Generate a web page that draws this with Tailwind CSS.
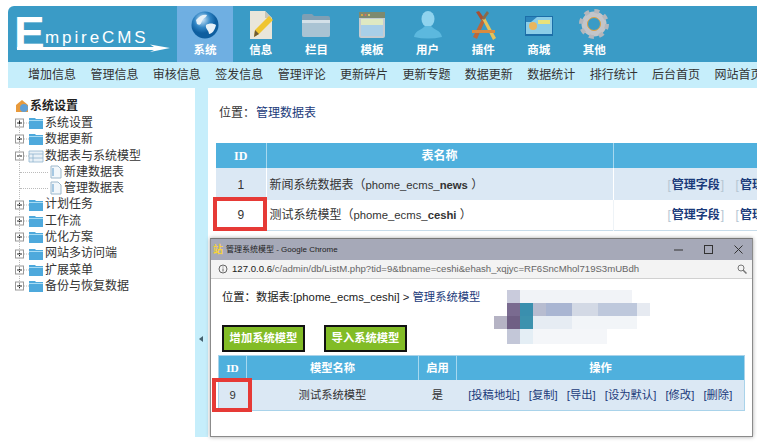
<!DOCTYPE html>
<html lang="zh"><head><meta charset="utf-8"><script src="https://cdn.jsdelivr.net/npm/@tailwindcss/browser@4"></script></head>
<body class="bg-white">
<div class="relative w-[757px] h-[443px] overflow-hidden bg-white pl-[8px] pt-[6px] font-['Liberation_Sans','Noto_Sans_CJK_SC',sans-serif] text-[12px] text-[#333]">
  <header class="flex h-[56px] bg-[#3a9bc6] rounded-tl-[6px]">
    <div class="w-[169px] shrink-0">
      <svg width="169" height="56" viewBox="0 0 169 56">
        <text x="6" y="43" fill="#fff" font-family="Liberation Sans" font-weight="bold" font-size="46">E</text>
        <text x="37" y="37" fill="#fff" font-family="Liberation Sans" font-size="17" letter-spacing="2.900">mpireCMS</text>
        <path d="M9 41H146L142 38.500L162 42L142 46L146 44H9Z" fill="#fff"/>
      </svg>
    </div>
    <nav class="flex text-white font-bold text-[11.5px] leading-none">
      <div class="w-[56px] flex flex-col items-center bg-[#6fafe2] pt-[3px]">
        <svg width="32" height="32" viewBox="0 0 32 32"><defs><radialGradient id="g" cx=".4" cy=".3"><stop offset="0" stop-color="#cfe8fa"/><stop offset=".6" stop-color="#2f84c4"/><stop offset="1" stop-color="#0e5e9f"/></radialGradient></defs><circle cx="16" cy="16" r="13.500" fill="url(#g)"/><path d="M7 11c4-5 8-6 11-5-1 3-4 3-5 6s-2 5-5 3zM17 16c3-2 7-2 10 0-1 5-4 9-7 9 0-4-4-5-3-9z" fill="#e6f1f8"/></svg>
        <span class="mt-[4px]">系统</span>
      </div>
      <div class="w-[55.6px] flex flex-col items-center pt-[3px]">
        <svg width="32" height="32" viewBox="0 0 32 32"><path d="M5 2H20L27 9V30H5Z" fill="#e9e6da"/><path d="M20 2V9H27Z" fill="#c9c5b5"/><path d="M9 28L10 21L24 7L28 11L14 25Z" fill="#efc52f"/><path d="M9 28L10 21L14 25Z" fill="#6d5a36"/></svg>
        <span class="mt-[4px]">信息</span>
      </div>
      <div class="w-[55.6px] flex flex-col items-center pt-[3px]">
        <svg width="32" height="32" viewBox="0 0 32 32"><path d="M2 7Q2 5 4 5H12L14 7H28Q30 7 30 9V26Q30 28 28 28H4Q2 28 2 26Z" fill="#7f9fb4"/><path d="M2 11H30V26Q30 28 28 28H4Q2 28 2 26Z" fill="#a9c3d3"/><path d="M2 11H30V14H2Z" fill="#d3e0e8"/></svg>
        <span class="mt-[4px]">栏目</span>
      </div>
      <div class="w-[55.6px] flex flex-col items-center pt-[3px]">
        <svg width="32" height="32" viewBox="0 0 32 32"><rect x="3" y="3" width="26" height="26" rx="2" fill="#c5ccd2"/><rect x="3" y="3" width="26" height="6" fill="#7d8a70"/><circle cx="6" cy="6" r="1" fill="#e8b13c"/><circle cx="9.500" cy="6" r="1" fill="#df6b5c"/><circle cx="13" cy="6" r="1" fill="#e8d96c"/><rect x="5" y="10" width="22" height="17" fill="#a9cfe8"/><rect x="5" y="10" width="22" height="6" fill="#dfe9c2"/></svg>
        <span class="mt-[4px]">模板</span>
      </div>
      <div class="w-[55.6px] flex flex-col items-center pt-[3px]">
        <svg width="32" height="32" viewBox="0 0 32 32"><ellipse cx="16" cy="10" rx="6.500" ry="8" fill="#8fd3ee"/><path d="M2 28C3 21 10 21 13 17H19C22 21 29 21 30 28Q16 31 2 28Z" fill="#5cb8de"/></svg>
        <span class="mt-[4px]">用户</span>
      </div>
      <div class="w-[55.6px] flex flex-col items-center pt-[3px]">
        <svg width="32" height="32" viewBox="0 0 32 32"><path d="M6 28L16 8L19 9.500L10 30Z" fill="#b9683c"/><path d="M15 9.500L17.500 8L29 29L26 31Z" fill="#e6c25a"/><path d="M5 21H28V24H5Z" fill="#d98b3f"/><path d="M9 3L12 2L17 9L14 11Z" fill="#a94f32"/><path d="M20 2L22 4L17 11L15 9Z" fill="#8a6a4a"/></svg>
        <span class="mt-[4px]">插件</span>
      </div>
      <div class="w-[55.6px] flex flex-col items-center pt-[3px]">
        <svg width="32" height="32" viewBox="0 0 32 32"><rect x="2" y="7" width="28" height="20" fill="#1c6ea8"/><rect x="3" y="8" width="26" height="17" fill="#8bcde8"/><circle cx="10" cy="17" r="4" fill="#e9b65d"/><rect x="15" y="11" width="12" height="4" fill="#e9e27a"/><path d="M3 8H14L8 13H3Z" fill="#2c86bd"/></svg>
        <span class="mt-[4px]">商城</span>
      </div>
      <div class="w-[55.6px] flex flex-col items-center pt-[3px]">
        <svg width="32" height="32" viewBox="0 0 32 32"><circle cx="16" cy="15" r="9.500" fill="none" stroke="#c3c5c9" stroke-width="6"/><circle cx="16" cy="15" r="13" fill="none" stroke="#b5b7bc" stroke-width="4" stroke-dasharray="5 5.200"/><circle cx="16" cy="15" r="5" fill="#3a9bc6"/><circle cx="16" cy="15" r="6.500" fill="none" stroke="#e3a13c" stroke-width="1"/></svg>
        <span class="mt-[4px]">其他</span>
      </div>
    </nav>
  </header>
  <nav class="flex h-[26px] items-center bg-[#c6eefb] pl-[20px] gap-[14.4px] whitespace-nowrap text-[#333]">
    <span>增加信息</span><span>管理信息</span><span>审核信息</span><span>签发信息</span><span>管理评论</span><span>更新碎片</span><span>更新专题</span><span>数据更新</span><span>数据统计</span><span>排行统计</span><span>后台首页</span><span class="shrink-0">网站首页</span>
  </nav>
  <main class="flex h-[349px]">
    <aside class="w-[187px] shrink-0 bg-white pt-[10px] pl-[7px] relative">
      <div class="absolute left-[11px] top-[36px] h-[165px] border-l border-dotted border-[#bbb]"></div>
      <div class="flex items-center h-[16px] gap-[1px] font-bold text-[#222]">
        <svg width="14" height="14" viewBox="0 0 14 14"><path d="M7 1L13 6V13H1V6Z" fill="#e89a3c"/><circle cx="9" cy="9" r="4" fill="#5f9fd6"/></svg><span>系统设置</span>
      </div>
      <ul class="mt-[1px] leading-[16.3px]">
        <li class="flex items-center h-[16.3px]"><svg class="shrink-0" width="30" height="14" viewBox="0 0 30 14"><rect x=".5" y="3" width="8" height="8" fill="#fff" stroke="#999"/><path d="M2 7H7M4.500 4.500V9.500" stroke="#222"/><path d="M9 7H14" stroke="#bbb" stroke-dasharray="1 1"/><path d="M14 2H20L21 3H28V13H14Z" fill="#4ea9dc"/><path d="M14 4H28V5H14Z" fill="#a9dcf4"/></svg><span>系统设置</span></li>
        <li class="flex items-center h-[16.3px]"><svg class="shrink-0" width="30" height="14" viewBox="0 0 30 14"><rect x=".5" y="3" width="8" height="8" fill="#fff" stroke="#999"/><path d="M2 7H7M4.500 4.500V9.500" stroke="#222"/><path d="M9 7H14" stroke="#bbb" stroke-dasharray="1 1"/><path d="M14 2H20L21 3H28V13H14Z" fill="#4ea9dc"/><path d="M14 4H28V5H14Z" fill="#a9dcf4"/></svg><span>数据更新</span></li>
        <li class="flex items-center h-[16.3px]"><svg class="shrink-0" width="30" height="14" viewBox="0 0 30 14"><rect x=".5" y="3" width="8" height="8" fill="#fff" stroke="#999"/><path d="M2 7H7" stroke="#222"/><path d="M9 7H14" stroke="#bbb" stroke-dasharray="1 1"/><path d="M14 2H28V13H14Z" fill="#e9f1f7" stroke="#8fb5cf" stroke-width=".8"/><path d="M14 5H28M14 9H28M18 5V13" stroke="#8fb5cf" stroke-width=".8"/></svg><span>数据表与系统模型</span></li>
        <li class="relative flex items-center h-[16.3px] pl-[34px]"><span class="absolute left-[5px] top-[8px] w-[28px] border-t border-dotted border-[#bbb]"></span><svg class="shrink-0" width="14" height="14" viewBox="0 0 14 14"><path d="M2 1H9L12 4V13H2Z" fill="#f2f7fb" stroke="#9db8cc"/><path d="M4 3V11" stroke="#a6c8e2" stroke-width="2"/></svg><span class="ml-[1px]">新建数据表</span></li>
        <li class="relative flex items-center h-[16.3px] pl-[34px]"><span class="absolute left-[5px] top-[8px] w-[28px] border-t border-dotted border-[#bbb]"></span><svg class="shrink-0" width="14" height="14" viewBox="0 0 14 14"><path d="M2 1H9L12 4V13H2Z" fill="#f2f7fb" stroke="#9db8cc"/><path d="M4 3V11" stroke="#a6c8e2" stroke-width="2"/></svg><span class="ml-[1px]">管理数据表</span></li>
        <li class="flex items-center h-[16.3px]"><svg class="shrink-0" width="30" height="14" viewBox="0 0 30 14"><rect x=".5" y="3" width="8" height="8" fill="#fff" stroke="#999"/><path d="M2 7H7M4.500 4.500V9.500" stroke="#222"/><path d="M9 7H14" stroke="#bbb" stroke-dasharray="1 1"/><path d="M14 2H20L21 3H28V13H14Z" fill="#4ea9dc"/><path d="M14 4H28V5H14Z" fill="#a9dcf4"/></svg><span>计划任务</span></li>
        <li class="flex items-center h-[16.3px]"><svg class="shrink-0" width="30" height="14" viewBox="0 0 30 14"><rect x=".5" y="3" width="8" height="8" fill="#fff" stroke="#999"/><path d="M2 7H7M4.500 4.500V9.500" stroke="#222"/><path d="M9 7H14" stroke="#bbb" stroke-dasharray="1 1"/><path d="M14 2H20L21 3H28V13H14Z" fill="#4ea9dc"/><path d="M14 4H28V5H14Z" fill="#a9dcf4"/></svg><span>工作流</span></li>
        <li class="flex items-center h-[16.3px]"><svg class="shrink-0" width="30" height="14" viewBox="0 0 30 14"><rect x=".5" y="3" width="8" height="8" fill="#fff" stroke="#999"/><path d="M2 7H7M4.500 4.500V9.500" stroke="#222"/><path d="M9 7H14" stroke="#bbb" stroke-dasharray="1 1"/><path d="M14 2H20L21 3H28V13H14Z" fill="#4ea9dc"/><path d="M14 4H28V5H14Z" fill="#a9dcf4"/></svg><span>优化方案</span></li>
        <li class="flex items-center h-[16.3px]"><svg class="shrink-0" width="30" height="14" viewBox="0 0 30 14"><rect x=".5" y="3" width="8" height="8" fill="#fff" stroke="#999"/><path d="M2 7H7M4.500 4.500V9.500" stroke="#222"/><path d="M9 7H14" stroke="#bbb" stroke-dasharray="1 1"/><path d="M14 2H20L21 3H28V13H14Z" fill="#4ea9dc"/><path d="M14 4H28V5H14Z" fill="#a9dcf4"/></svg><span>网站多访问端</span></li>
        <li class="flex items-center h-[16.3px]"><svg class="shrink-0" width="30" height="14" viewBox="0 0 30 14"><rect x=".5" y="3" width="8" height="8" fill="#fff" stroke="#999"/><path d="M2 7H7M4.500 4.500V9.500" stroke="#222"/><path d="M9 7H14" stroke="#bbb" stroke-dasharray="1 1"/><path d="M14 2H20L21 3H28V13H14Z" fill="#4ea9dc"/><path d="M14 4H28V5H14Z" fill="#a9dcf4"/></svg><span>扩展菜单</span></li>
        <li class="flex items-center h-[16.3px]"><svg class="shrink-0" width="30" height="14" viewBox="0 0 30 14"><rect x=".5" y="3" width="8" height="8" fill="#fff" stroke="#999"/><path d="M2 7H7M4.500 4.500V9.500" stroke="#222"/><path d="M9 7H14" stroke="#bbb" stroke-dasharray="1 1"/><path d="M14 2H20L21 3H28V13H14Z" fill="#4ea9dc"/><path d="M14 4H28V5H14Z" fill="#a9dcf4"/></svg><span>备份与恢复数据</span></li>
      </ul>
    </aside>
    <div class="w-[13px] shrink-0 bg-[#c6eefb] pt-[248px] pl-[4px]"><div class="w-0 h-0 border-y-[3px] border-y-transparent border-r-[4px] border-r-[#44606e]"></div></div>
    <section class="flex-1 bg-white pl-[8px] pt-[17px] min-w-0">
      <p class="h-[16px] leading-[16px] pl-[3px]">位置：<span class="ml-[1px] text-[#1a3a7a]">管理数据表</span></p>
      <table class="mt-[22px] w-[560px] table-fixed border-collapse border-b border-[#c7dcea]">
        <colgroup><col class="w-[50px]"><col class="w-[347px]"><col></colgroup>
        <thead class="bg-[#4fb0dd] text-white font-bold"><tr class="h-[25px]"><th class="pt-[1px] border-r border-[#a6d8ef] font-['Liberation_Serif']">ID</th><th class="pt-[1px] border-r border-[#a6d8ef]">表名称</th><th></th></tr></thead>
        <tbody>
          <tr class="h-[32px] bg-[#dbe8f4]"><td class="pt-[1px] text-center">1</td><td class="pt-[1px] pl-[3px] border-l border-white">新闻系统数据表（<span class="text-[11.3px]">phome_ecms_<b>news</b></span> ）</td><td class="pt-[1px] pl-[54px] border-l border-white whitespace-nowrap text-[#b5c6d2]"><span class="mr-[8px]">[<b class="mx-[1px] text-[#1a3a7a]">管理字段</b>]</span> <span>[<b class="ml-[1px] text-[#1a3a7a]">管理</b></span></td></tr>
          <tr class="h-[30px] bg-white"><td class="pt-[1px] text-center">9</td><td class="pt-[1px] pl-[3px] border-l border-[#eef3f7]">测试系统模型（<span class="text-[11.3px]">phome_ecms_<b>ceshi</b></span> ）</td><td class="pt-[1px] pl-[54px] border-l border-[#eef3f7] whitespace-nowrap text-[#b5c6d2]"><span class="mr-[8px]">[<b class="mx-[1px] text-[#1a3a7a]">管理字段</b>]</span> <span>[<b class="ml-[1px] text-[#1a3a7a]">管理</b></span></td></tr>
        </tbody>
      </table>
    </section>
  </main>
  <div class="absolute left-[213px] top-[197px] w-[54px] h-[34px] border-[4px] border-[#e63a36]"></div>

  <div class="absolute left-[210px] top-[238px] w-[543px] h-[199px] bg-white border border-[#8b8b8b] border-t-[#777] shadow-[0_0_4px_rgba(0,0,0,.35)] overflow-hidden">
    <div class="flex items-center h-[21px] bg-[#a6a9b8] pl-[2px] pr-[9px] text-[8px] text-[#222]">
      <span class="text-[#f7d33a] font-bold text-[10px] leading-none">站</span><span class="ml-[3px]">管理系统模型 - Google Chrome</span>
      <span class="ml-auto flex items-center gap-[21px] text-[#333]">
        <svg width="9" height="9" viewBox="0 0 9 9"><path d="M0 5H9" stroke="#333"/></svg>
        <svg width="9" height="9" viewBox="0 0 9 9"><rect x=".5" y=".5" width="8" height="8" fill="none" stroke="#333"/></svg>
        <svg width="9" height="9" viewBox="0 0 9 9"><path d="M.5.500L8.500 8.500M8.500.500L.5 8.500" stroke="#333"/></svg>
      </span>
    </div>
    <div class="flex items-center h-[19px] bg-[#f3f3f3] border-b border-[#d0d0d0] pl-[7px] pr-[5px] text-[9.600px] text-[#666]">
      <svg width="10" height="10" viewBox="0 0 10 10"><circle cx="5" cy="5" r="4" fill="none" stroke="#666"/><path d="M5 4.500V7.500M5 2.500V3.500" stroke="#666"/></svg>
      <span class="ml-[4px]"><span class="text-[#222]">127.0.0.6</span>/c/admin/db/ListM.php?tid=9&amp;tbname=ceshi&amp;ehash_xqjyc=RF6SncMhol719S3mUBdh</span>
      <svg class="ml-auto" width="10" height="10" viewBox="0 0 10 10"><circle cx="4" cy="4" r="3" fill="none" stroke="#777"/><path d="M6 6L9.500 9.500" stroke="#777" stroke-width="1.500"/></svg>
    </div>
    <div class="relative pl-[10px] pt-[10px] text-[11.300px]">
      <p class="h-[16px] leading-[16px] text-[#222] pl-[1px]">位置：数据表:[phome_ecms_ceshi] &gt; <span class="text-[#1a3a7a]">管理系统模型</span></p>
      <svg class="absolute left-[283px] top-[11px]" width="156" height="54" viewBox="0 0 156 54" shape-rendering="crispEdges">
        <rect x="13" y="0" width="125" height="13" fill="#f1f3f7"/><rect x="13" y="0" width="13" height="13" fill="#c9cbdc"/>
        <rect x="13" y="13" width="143" height="13" fill="#e6eaf1"/><rect x="13" y="13" width="13" height="13" fill="#7a6b90"/><rect x="26" y="13" width="13" height="13" fill="#3a8fae"/><rect x="39" y="13" width="13" height="13" fill="#b7bcd0"/><rect x="52" y="13" width="26" height="13" fill="#a9b5d2"/><rect x="78" y="13" width="26" height="13" fill="#d3d9e5"/><rect x="104" y="13" width="39" height="13" fill="#bec8dc"/>
        <rect x="0" y="26" width="143" height="13" fill="#f2f5f8"/><rect x="0" y="26" width="13" height="13" fill="#b5b3c4"/><rect x="13" y="26" width="13" height="13" fill="#6f5f84"/><rect x="26" y="26" width="13" height="13" fill="#3d92ae"/><rect x="39" y="26" width="39" height="13" fill="#e6ecf3"/>
        <rect x="13" y="39" width="100" height="15" fill="#f4f6f9"/><rect x="13" y="39" width="13" height="15" fill="#c3c7d8"/><rect x="26" y="39" width="13" height="15" fill="#e4eef5"/>
      </svg>
      <div class="flex gap-[19px] mt-[20px] pl-[1px] text-white font-bold">
        <span class="flex items-center justify-center w-[83px] h-[27px] bg-[#82bc26] border-[2px] border-[#111]">增加系统模型</span>
        <span class="flex items-center justify-center w-[83px] h-[27px] bg-[#82bc26] border-[2px] border-[#111]">导入系统模型</span>
      </div>
      <table class="ml-[-3px] mt-[3px] w-[527px] table-fixed border-collapse border border-[#a9d3ea]">
        <colgroup><col class="w-[28px]"><col class="w-[172px]"><col class="w-[38px]"><col></colgroup>
        <thead class="bg-[#4fb0dd] text-white font-bold"><tr class="h-[24px]"><th class="pt-[1px] border-r border-[#a6d8ef] font-['Liberation_Serif']">ID</th><th class="pt-[1px] border-r border-[#a6d8ef]">模型名称</th><th class="pt-[1px] border-r border-[#a6d8ef]">启用</th><th class="pt-[1px]">操作</th></tr></thead>
        <tbody><tr class="h-[31px] bg-[#dbe8f4] text-center"><td class="pt-[1px]">9</td><td class="pt-[1px]">测试系统模型</td><td class="pt-[1px]">是</td><td class="pt-[1px] whitespace-nowrap text-[#1a3a7a] [word-spacing:6px]">[投稿地址] [复制] [导出] [设为默认] [修改] [删除]</td></tr></tbody>
      </table>
    </div>
  </div>
  <div class="absolute left-[212px] top-[378px] w-[40px] h-[34px] border-[4px] border-[#e63a36]"></div>
</div>
</body></html>
